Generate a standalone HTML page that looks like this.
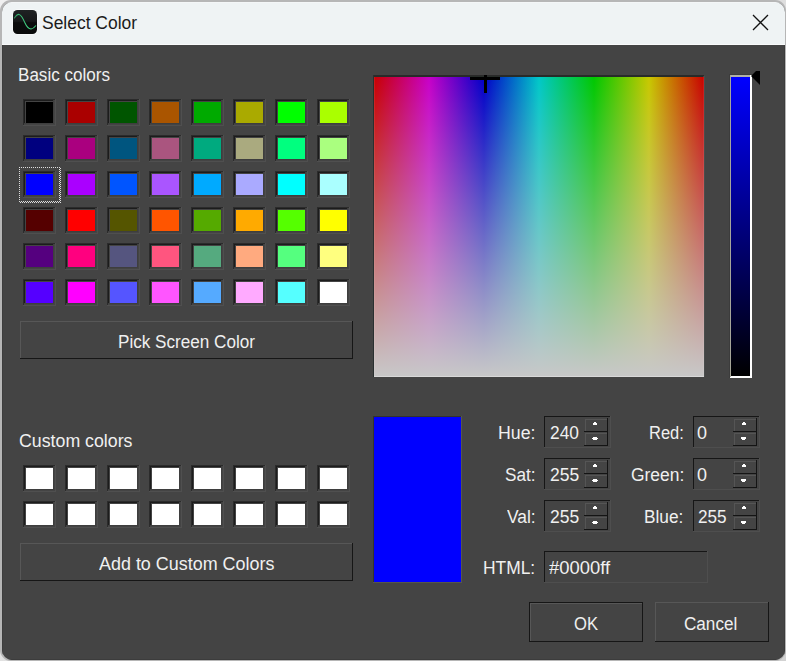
<!DOCTYPE html>
<html><head><meta charset="utf-8"><style>
html,body{margin:0;padding:0;width:786px;height:661px;overflow:hidden;background:linear-gradient(135deg,#f0f0f0,#e0e0e0 50%,#d2d2d2);position:relative}
div,svg{position:absolute}
.t{font-family:"Liberation Sans",sans-serif;font-size:18px;line-height:20px;white-space:pre;transform-origin:0 0}
</style></head><body>
<div style="left:0px;top:0px;width:786px;height:661px;background:#b6b6b6;border-radius:11px"></div><div style="left:2px;top:2px;width:783px;height:658px;border-radius:10px;overflow:hidden;background:#444444"><div style="left:0px;top:0px;width:783px;height:43px;background:#eff3f4"></div><div style="left:0px;top:0px;width:783px;height:1px;background:#f4f6f7"></div><div style="left:0px;top:42px;width:783px;height:1px;background:#fafbfb"></div><div style="left:0px;top:43px;width:1px;height:615px;background:#3d3d3d"></div><div style="left:782px;top:43px;width:1px;height:615px;background:#3c3c3c"></div><div style="left:0px;top:657px;width:783px;height:1px;background:#3c3c3c"></div></div><div style="left:23px;top:99px;width:32px;height:1px;background:#2b2b2b"></div><div style="left:23px;top:99px;width:1px;height:26px;background:#2b2b2b"></div><div style="left:24px;top:100px;width:30px;height:1px;background:#1c1c1c"></div><div style="left:24px;top:100px;width:1px;height:24px;background:#1c1c1c"></div><div style="left:23px;top:125px;width:33px;height:1px;background:#4f4f4f"></div><div style="left:55px;top:99px;width:1px;height:27px;background:#4f4f4f"></div><div style="left:24px;top:123px;width:30px;height:1px;background:#3e3e3e"></div><div style="left:53px;top:100px;width:1px;height:24px;background:#3e3e3e"></div><div style="left:26px;top:102px;width:27px;height:21px;background:rgb(0, 0, 0)"></div><div style="left:23px;top:135px;width:32px;height:1px;background:#2b2b2b"></div><div style="left:23px;top:135px;width:1px;height:26px;background:#2b2b2b"></div><div style="left:24px;top:136px;width:30px;height:1px;background:#1c1c1c"></div><div style="left:24px;top:136px;width:1px;height:24px;background:#1c1c1c"></div><div style="left:23px;top:161px;width:33px;height:1px;background:#4f4f4f"></div><div style="left:55px;top:135px;width:1px;height:27px;background:#4f4f4f"></div><div style="left:24px;top:159px;width:30px;height:1px;background:#3e3e3e"></div><div style="left:53px;top:136px;width:1px;height:24px;background:#3e3e3e"></div><div style="left:26px;top:138px;width:27px;height:21px;background:rgb(0, 0, 127)"></div><div style="left:23px;top:171px;width:32px;height:1px;background:#2b2b2b"></div><div style="left:23px;top:171px;width:1px;height:26px;background:#2b2b2b"></div><div style="left:24px;top:172px;width:30px;height:1px;background:#1c1c1c"></div><div style="left:24px;top:172px;width:1px;height:24px;background:#1c1c1c"></div><div style="left:23px;top:197px;width:33px;height:1px;background:#4f4f4f"></div><div style="left:55px;top:171px;width:1px;height:27px;background:#4f4f4f"></div><div style="left:24px;top:195px;width:30px;height:1px;background:#3e3e3e"></div><div style="left:53px;top:172px;width:1px;height:24px;background:#3e3e3e"></div><div style="left:26px;top:174px;width:27px;height:21px;background:rgb(0, 0, 255)"></div><div style="left:23px;top:207px;width:32px;height:1px;background:#2b2b2b"></div><div style="left:23px;top:207px;width:1px;height:26px;background:#2b2b2b"></div><div style="left:24px;top:208px;width:30px;height:1px;background:#1c1c1c"></div><div style="left:24px;top:208px;width:1px;height:24px;background:#1c1c1c"></div><div style="left:23px;top:233px;width:33px;height:1px;background:#4f4f4f"></div><div style="left:55px;top:207px;width:1px;height:27px;background:#4f4f4f"></div><div style="left:24px;top:231px;width:30px;height:1px;background:#3e3e3e"></div><div style="left:53px;top:208px;width:1px;height:24px;background:#3e3e3e"></div><div style="left:26px;top:210px;width:27px;height:21px;background:rgb(85, 0, 0)"></div><div style="left:23px;top:243px;width:32px;height:1px;background:#2b2b2b"></div><div style="left:23px;top:243px;width:1px;height:26px;background:#2b2b2b"></div><div style="left:24px;top:244px;width:30px;height:1px;background:#1c1c1c"></div><div style="left:24px;top:244px;width:1px;height:24px;background:#1c1c1c"></div><div style="left:23px;top:269px;width:33px;height:1px;background:#4f4f4f"></div><div style="left:55px;top:243px;width:1px;height:27px;background:#4f4f4f"></div><div style="left:24px;top:267px;width:30px;height:1px;background:#3e3e3e"></div><div style="left:53px;top:244px;width:1px;height:24px;background:#3e3e3e"></div><div style="left:26px;top:246px;width:27px;height:21px;background:rgb(85, 0, 127)"></div><div style="left:23px;top:279px;width:32px;height:1px;background:#2b2b2b"></div><div style="left:23px;top:279px;width:1px;height:26px;background:#2b2b2b"></div><div style="left:24px;top:280px;width:30px;height:1px;background:#1c1c1c"></div><div style="left:24px;top:280px;width:1px;height:24px;background:#1c1c1c"></div><div style="left:23px;top:305px;width:33px;height:1px;background:#4f4f4f"></div><div style="left:55px;top:279px;width:1px;height:27px;background:#4f4f4f"></div><div style="left:24px;top:303px;width:30px;height:1px;background:#3e3e3e"></div><div style="left:53px;top:280px;width:1px;height:24px;background:#3e3e3e"></div><div style="left:26px;top:282px;width:27px;height:21px;background:rgb(85, 0, 255)"></div><div style="left:65px;top:99px;width:32px;height:1px;background:#2b2b2b"></div><div style="left:65px;top:99px;width:1px;height:26px;background:#2b2b2b"></div><div style="left:66px;top:100px;width:30px;height:1px;background:#1c1c1c"></div><div style="left:66px;top:100px;width:1px;height:24px;background:#1c1c1c"></div><div style="left:65px;top:125px;width:33px;height:1px;background:#4f4f4f"></div><div style="left:97px;top:99px;width:1px;height:27px;background:#4f4f4f"></div><div style="left:66px;top:123px;width:30px;height:1px;background:#3e3e3e"></div><div style="left:95px;top:100px;width:1px;height:24px;background:#3e3e3e"></div><div style="left:68px;top:102px;width:27px;height:21px;background:rgb(170, 0, 0)"></div><div style="left:65px;top:135px;width:32px;height:1px;background:#2b2b2b"></div><div style="left:65px;top:135px;width:1px;height:26px;background:#2b2b2b"></div><div style="left:66px;top:136px;width:30px;height:1px;background:#1c1c1c"></div><div style="left:66px;top:136px;width:1px;height:24px;background:#1c1c1c"></div><div style="left:65px;top:161px;width:33px;height:1px;background:#4f4f4f"></div><div style="left:97px;top:135px;width:1px;height:27px;background:#4f4f4f"></div><div style="left:66px;top:159px;width:30px;height:1px;background:#3e3e3e"></div><div style="left:95px;top:136px;width:1px;height:24px;background:#3e3e3e"></div><div style="left:68px;top:138px;width:27px;height:21px;background:rgb(170, 0, 127)"></div><div style="left:65px;top:171px;width:32px;height:1px;background:#2b2b2b"></div><div style="left:65px;top:171px;width:1px;height:26px;background:#2b2b2b"></div><div style="left:66px;top:172px;width:30px;height:1px;background:#1c1c1c"></div><div style="left:66px;top:172px;width:1px;height:24px;background:#1c1c1c"></div><div style="left:65px;top:197px;width:33px;height:1px;background:#4f4f4f"></div><div style="left:97px;top:171px;width:1px;height:27px;background:#4f4f4f"></div><div style="left:66px;top:195px;width:30px;height:1px;background:#3e3e3e"></div><div style="left:95px;top:172px;width:1px;height:24px;background:#3e3e3e"></div><div style="left:68px;top:174px;width:27px;height:21px;background:rgb(170, 0, 255)"></div><div style="left:65px;top:207px;width:32px;height:1px;background:#2b2b2b"></div><div style="left:65px;top:207px;width:1px;height:26px;background:#2b2b2b"></div><div style="left:66px;top:208px;width:30px;height:1px;background:#1c1c1c"></div><div style="left:66px;top:208px;width:1px;height:24px;background:#1c1c1c"></div><div style="left:65px;top:233px;width:33px;height:1px;background:#4f4f4f"></div><div style="left:97px;top:207px;width:1px;height:27px;background:#4f4f4f"></div><div style="left:66px;top:231px;width:30px;height:1px;background:#3e3e3e"></div><div style="left:95px;top:208px;width:1px;height:24px;background:#3e3e3e"></div><div style="left:68px;top:210px;width:27px;height:21px;background:rgb(255, 0, 0)"></div><div style="left:65px;top:243px;width:32px;height:1px;background:#2b2b2b"></div><div style="left:65px;top:243px;width:1px;height:26px;background:#2b2b2b"></div><div style="left:66px;top:244px;width:30px;height:1px;background:#1c1c1c"></div><div style="left:66px;top:244px;width:1px;height:24px;background:#1c1c1c"></div><div style="left:65px;top:269px;width:33px;height:1px;background:#4f4f4f"></div><div style="left:97px;top:243px;width:1px;height:27px;background:#4f4f4f"></div><div style="left:66px;top:267px;width:30px;height:1px;background:#3e3e3e"></div><div style="left:95px;top:244px;width:1px;height:24px;background:#3e3e3e"></div><div style="left:68px;top:246px;width:27px;height:21px;background:rgb(255, 0, 127)"></div><div style="left:65px;top:279px;width:32px;height:1px;background:#2b2b2b"></div><div style="left:65px;top:279px;width:1px;height:26px;background:#2b2b2b"></div><div style="left:66px;top:280px;width:30px;height:1px;background:#1c1c1c"></div><div style="left:66px;top:280px;width:1px;height:24px;background:#1c1c1c"></div><div style="left:65px;top:305px;width:33px;height:1px;background:#4f4f4f"></div><div style="left:97px;top:279px;width:1px;height:27px;background:#4f4f4f"></div><div style="left:66px;top:303px;width:30px;height:1px;background:#3e3e3e"></div><div style="left:95px;top:280px;width:1px;height:24px;background:#3e3e3e"></div><div style="left:68px;top:282px;width:27px;height:21px;background:rgb(255, 0, 255)"></div><div style="left:107px;top:99px;width:32px;height:1px;background:#2b2b2b"></div><div style="left:107px;top:99px;width:1px;height:26px;background:#2b2b2b"></div><div style="left:108px;top:100px;width:30px;height:1px;background:#1c1c1c"></div><div style="left:108px;top:100px;width:1px;height:24px;background:#1c1c1c"></div><div style="left:107px;top:125px;width:33px;height:1px;background:#4f4f4f"></div><div style="left:139px;top:99px;width:1px;height:27px;background:#4f4f4f"></div><div style="left:108px;top:123px;width:30px;height:1px;background:#3e3e3e"></div><div style="left:137px;top:100px;width:1px;height:24px;background:#3e3e3e"></div><div style="left:110px;top:102px;width:27px;height:21px;background:rgb(0, 85, 0)"></div><div style="left:107px;top:135px;width:32px;height:1px;background:#2b2b2b"></div><div style="left:107px;top:135px;width:1px;height:26px;background:#2b2b2b"></div><div style="left:108px;top:136px;width:30px;height:1px;background:#1c1c1c"></div><div style="left:108px;top:136px;width:1px;height:24px;background:#1c1c1c"></div><div style="left:107px;top:161px;width:33px;height:1px;background:#4f4f4f"></div><div style="left:139px;top:135px;width:1px;height:27px;background:#4f4f4f"></div><div style="left:108px;top:159px;width:30px;height:1px;background:#3e3e3e"></div><div style="left:137px;top:136px;width:1px;height:24px;background:#3e3e3e"></div><div style="left:110px;top:138px;width:27px;height:21px;background:rgb(0, 85, 127)"></div><div style="left:107px;top:171px;width:32px;height:1px;background:#2b2b2b"></div><div style="left:107px;top:171px;width:1px;height:26px;background:#2b2b2b"></div><div style="left:108px;top:172px;width:30px;height:1px;background:#1c1c1c"></div><div style="left:108px;top:172px;width:1px;height:24px;background:#1c1c1c"></div><div style="left:107px;top:197px;width:33px;height:1px;background:#4f4f4f"></div><div style="left:139px;top:171px;width:1px;height:27px;background:#4f4f4f"></div><div style="left:108px;top:195px;width:30px;height:1px;background:#3e3e3e"></div><div style="left:137px;top:172px;width:1px;height:24px;background:#3e3e3e"></div><div style="left:110px;top:174px;width:27px;height:21px;background:rgb(0, 85, 255)"></div><div style="left:107px;top:207px;width:32px;height:1px;background:#2b2b2b"></div><div style="left:107px;top:207px;width:1px;height:26px;background:#2b2b2b"></div><div style="left:108px;top:208px;width:30px;height:1px;background:#1c1c1c"></div><div style="left:108px;top:208px;width:1px;height:24px;background:#1c1c1c"></div><div style="left:107px;top:233px;width:33px;height:1px;background:#4f4f4f"></div><div style="left:139px;top:207px;width:1px;height:27px;background:#4f4f4f"></div><div style="left:108px;top:231px;width:30px;height:1px;background:#3e3e3e"></div><div style="left:137px;top:208px;width:1px;height:24px;background:#3e3e3e"></div><div style="left:110px;top:210px;width:27px;height:21px;background:rgb(85, 85, 0)"></div><div style="left:107px;top:243px;width:32px;height:1px;background:#2b2b2b"></div><div style="left:107px;top:243px;width:1px;height:26px;background:#2b2b2b"></div><div style="left:108px;top:244px;width:30px;height:1px;background:#1c1c1c"></div><div style="left:108px;top:244px;width:1px;height:24px;background:#1c1c1c"></div><div style="left:107px;top:269px;width:33px;height:1px;background:#4f4f4f"></div><div style="left:139px;top:243px;width:1px;height:27px;background:#4f4f4f"></div><div style="left:108px;top:267px;width:30px;height:1px;background:#3e3e3e"></div><div style="left:137px;top:244px;width:1px;height:24px;background:#3e3e3e"></div><div style="left:110px;top:246px;width:27px;height:21px;background:rgb(85, 85, 127)"></div><div style="left:107px;top:279px;width:32px;height:1px;background:#2b2b2b"></div><div style="left:107px;top:279px;width:1px;height:26px;background:#2b2b2b"></div><div style="left:108px;top:280px;width:30px;height:1px;background:#1c1c1c"></div><div style="left:108px;top:280px;width:1px;height:24px;background:#1c1c1c"></div><div style="left:107px;top:305px;width:33px;height:1px;background:#4f4f4f"></div><div style="left:139px;top:279px;width:1px;height:27px;background:#4f4f4f"></div><div style="left:108px;top:303px;width:30px;height:1px;background:#3e3e3e"></div><div style="left:137px;top:280px;width:1px;height:24px;background:#3e3e3e"></div><div style="left:110px;top:282px;width:27px;height:21px;background:rgb(85, 85, 255)"></div><div style="left:149px;top:99px;width:32px;height:1px;background:#2b2b2b"></div><div style="left:149px;top:99px;width:1px;height:26px;background:#2b2b2b"></div><div style="left:150px;top:100px;width:30px;height:1px;background:#1c1c1c"></div><div style="left:150px;top:100px;width:1px;height:24px;background:#1c1c1c"></div><div style="left:149px;top:125px;width:33px;height:1px;background:#4f4f4f"></div><div style="left:181px;top:99px;width:1px;height:27px;background:#4f4f4f"></div><div style="left:150px;top:123px;width:30px;height:1px;background:#3e3e3e"></div><div style="left:179px;top:100px;width:1px;height:24px;background:#3e3e3e"></div><div style="left:152px;top:102px;width:27px;height:21px;background:rgb(170, 85, 0)"></div><div style="left:149px;top:135px;width:32px;height:1px;background:#2b2b2b"></div><div style="left:149px;top:135px;width:1px;height:26px;background:#2b2b2b"></div><div style="left:150px;top:136px;width:30px;height:1px;background:#1c1c1c"></div><div style="left:150px;top:136px;width:1px;height:24px;background:#1c1c1c"></div><div style="left:149px;top:161px;width:33px;height:1px;background:#4f4f4f"></div><div style="left:181px;top:135px;width:1px;height:27px;background:#4f4f4f"></div><div style="left:150px;top:159px;width:30px;height:1px;background:#3e3e3e"></div><div style="left:179px;top:136px;width:1px;height:24px;background:#3e3e3e"></div><div style="left:152px;top:138px;width:27px;height:21px;background:rgb(170, 85, 127)"></div><div style="left:149px;top:171px;width:32px;height:1px;background:#2b2b2b"></div><div style="left:149px;top:171px;width:1px;height:26px;background:#2b2b2b"></div><div style="left:150px;top:172px;width:30px;height:1px;background:#1c1c1c"></div><div style="left:150px;top:172px;width:1px;height:24px;background:#1c1c1c"></div><div style="left:149px;top:197px;width:33px;height:1px;background:#4f4f4f"></div><div style="left:181px;top:171px;width:1px;height:27px;background:#4f4f4f"></div><div style="left:150px;top:195px;width:30px;height:1px;background:#3e3e3e"></div><div style="left:179px;top:172px;width:1px;height:24px;background:#3e3e3e"></div><div style="left:152px;top:174px;width:27px;height:21px;background:rgb(170, 85, 255)"></div><div style="left:149px;top:207px;width:32px;height:1px;background:#2b2b2b"></div><div style="left:149px;top:207px;width:1px;height:26px;background:#2b2b2b"></div><div style="left:150px;top:208px;width:30px;height:1px;background:#1c1c1c"></div><div style="left:150px;top:208px;width:1px;height:24px;background:#1c1c1c"></div><div style="left:149px;top:233px;width:33px;height:1px;background:#4f4f4f"></div><div style="left:181px;top:207px;width:1px;height:27px;background:#4f4f4f"></div><div style="left:150px;top:231px;width:30px;height:1px;background:#3e3e3e"></div><div style="left:179px;top:208px;width:1px;height:24px;background:#3e3e3e"></div><div style="left:152px;top:210px;width:27px;height:21px;background:rgb(255, 85, 0)"></div><div style="left:149px;top:243px;width:32px;height:1px;background:#2b2b2b"></div><div style="left:149px;top:243px;width:1px;height:26px;background:#2b2b2b"></div><div style="left:150px;top:244px;width:30px;height:1px;background:#1c1c1c"></div><div style="left:150px;top:244px;width:1px;height:24px;background:#1c1c1c"></div><div style="left:149px;top:269px;width:33px;height:1px;background:#4f4f4f"></div><div style="left:181px;top:243px;width:1px;height:27px;background:#4f4f4f"></div><div style="left:150px;top:267px;width:30px;height:1px;background:#3e3e3e"></div><div style="left:179px;top:244px;width:1px;height:24px;background:#3e3e3e"></div><div style="left:152px;top:246px;width:27px;height:21px;background:rgb(255, 85, 127)"></div><div style="left:149px;top:279px;width:32px;height:1px;background:#2b2b2b"></div><div style="left:149px;top:279px;width:1px;height:26px;background:#2b2b2b"></div><div style="left:150px;top:280px;width:30px;height:1px;background:#1c1c1c"></div><div style="left:150px;top:280px;width:1px;height:24px;background:#1c1c1c"></div><div style="left:149px;top:305px;width:33px;height:1px;background:#4f4f4f"></div><div style="left:181px;top:279px;width:1px;height:27px;background:#4f4f4f"></div><div style="left:150px;top:303px;width:30px;height:1px;background:#3e3e3e"></div><div style="left:179px;top:280px;width:1px;height:24px;background:#3e3e3e"></div><div style="left:152px;top:282px;width:27px;height:21px;background:rgb(255, 85, 255)"></div><div style="left:191px;top:99px;width:32px;height:1px;background:#2b2b2b"></div><div style="left:191px;top:99px;width:1px;height:26px;background:#2b2b2b"></div><div style="left:192px;top:100px;width:30px;height:1px;background:#1c1c1c"></div><div style="left:192px;top:100px;width:1px;height:24px;background:#1c1c1c"></div><div style="left:191px;top:125px;width:33px;height:1px;background:#4f4f4f"></div><div style="left:223px;top:99px;width:1px;height:27px;background:#4f4f4f"></div><div style="left:192px;top:123px;width:30px;height:1px;background:#3e3e3e"></div><div style="left:221px;top:100px;width:1px;height:24px;background:#3e3e3e"></div><div style="left:194px;top:102px;width:27px;height:21px;background:rgb(0, 170, 0)"></div><div style="left:191px;top:135px;width:32px;height:1px;background:#2b2b2b"></div><div style="left:191px;top:135px;width:1px;height:26px;background:#2b2b2b"></div><div style="left:192px;top:136px;width:30px;height:1px;background:#1c1c1c"></div><div style="left:192px;top:136px;width:1px;height:24px;background:#1c1c1c"></div><div style="left:191px;top:161px;width:33px;height:1px;background:#4f4f4f"></div><div style="left:223px;top:135px;width:1px;height:27px;background:#4f4f4f"></div><div style="left:192px;top:159px;width:30px;height:1px;background:#3e3e3e"></div><div style="left:221px;top:136px;width:1px;height:24px;background:#3e3e3e"></div><div style="left:194px;top:138px;width:27px;height:21px;background:rgb(0, 170, 127)"></div><div style="left:191px;top:171px;width:32px;height:1px;background:#2b2b2b"></div><div style="left:191px;top:171px;width:1px;height:26px;background:#2b2b2b"></div><div style="left:192px;top:172px;width:30px;height:1px;background:#1c1c1c"></div><div style="left:192px;top:172px;width:1px;height:24px;background:#1c1c1c"></div><div style="left:191px;top:197px;width:33px;height:1px;background:#4f4f4f"></div><div style="left:223px;top:171px;width:1px;height:27px;background:#4f4f4f"></div><div style="left:192px;top:195px;width:30px;height:1px;background:#3e3e3e"></div><div style="left:221px;top:172px;width:1px;height:24px;background:#3e3e3e"></div><div style="left:194px;top:174px;width:27px;height:21px;background:rgb(0, 170, 255)"></div><div style="left:191px;top:207px;width:32px;height:1px;background:#2b2b2b"></div><div style="left:191px;top:207px;width:1px;height:26px;background:#2b2b2b"></div><div style="left:192px;top:208px;width:30px;height:1px;background:#1c1c1c"></div><div style="left:192px;top:208px;width:1px;height:24px;background:#1c1c1c"></div><div style="left:191px;top:233px;width:33px;height:1px;background:#4f4f4f"></div><div style="left:223px;top:207px;width:1px;height:27px;background:#4f4f4f"></div><div style="left:192px;top:231px;width:30px;height:1px;background:#3e3e3e"></div><div style="left:221px;top:208px;width:1px;height:24px;background:#3e3e3e"></div><div style="left:194px;top:210px;width:27px;height:21px;background:rgb(85, 170, 0)"></div><div style="left:191px;top:243px;width:32px;height:1px;background:#2b2b2b"></div><div style="left:191px;top:243px;width:1px;height:26px;background:#2b2b2b"></div><div style="left:192px;top:244px;width:30px;height:1px;background:#1c1c1c"></div><div style="left:192px;top:244px;width:1px;height:24px;background:#1c1c1c"></div><div style="left:191px;top:269px;width:33px;height:1px;background:#4f4f4f"></div><div style="left:223px;top:243px;width:1px;height:27px;background:#4f4f4f"></div><div style="left:192px;top:267px;width:30px;height:1px;background:#3e3e3e"></div><div style="left:221px;top:244px;width:1px;height:24px;background:#3e3e3e"></div><div style="left:194px;top:246px;width:27px;height:21px;background:rgb(85, 170, 127)"></div><div style="left:191px;top:279px;width:32px;height:1px;background:#2b2b2b"></div><div style="left:191px;top:279px;width:1px;height:26px;background:#2b2b2b"></div><div style="left:192px;top:280px;width:30px;height:1px;background:#1c1c1c"></div><div style="left:192px;top:280px;width:1px;height:24px;background:#1c1c1c"></div><div style="left:191px;top:305px;width:33px;height:1px;background:#4f4f4f"></div><div style="left:223px;top:279px;width:1px;height:27px;background:#4f4f4f"></div><div style="left:192px;top:303px;width:30px;height:1px;background:#3e3e3e"></div><div style="left:221px;top:280px;width:1px;height:24px;background:#3e3e3e"></div><div style="left:194px;top:282px;width:27px;height:21px;background:rgb(85, 170, 255)"></div><div style="left:233px;top:99px;width:32px;height:1px;background:#2b2b2b"></div><div style="left:233px;top:99px;width:1px;height:26px;background:#2b2b2b"></div><div style="left:234px;top:100px;width:30px;height:1px;background:#1c1c1c"></div><div style="left:234px;top:100px;width:1px;height:24px;background:#1c1c1c"></div><div style="left:233px;top:125px;width:33px;height:1px;background:#4f4f4f"></div><div style="left:265px;top:99px;width:1px;height:27px;background:#4f4f4f"></div><div style="left:234px;top:123px;width:30px;height:1px;background:#3e3e3e"></div><div style="left:263px;top:100px;width:1px;height:24px;background:#3e3e3e"></div><div style="left:236px;top:102px;width:27px;height:21px;background:rgb(170, 170, 0)"></div><div style="left:233px;top:135px;width:32px;height:1px;background:#2b2b2b"></div><div style="left:233px;top:135px;width:1px;height:26px;background:#2b2b2b"></div><div style="left:234px;top:136px;width:30px;height:1px;background:#1c1c1c"></div><div style="left:234px;top:136px;width:1px;height:24px;background:#1c1c1c"></div><div style="left:233px;top:161px;width:33px;height:1px;background:#4f4f4f"></div><div style="left:265px;top:135px;width:1px;height:27px;background:#4f4f4f"></div><div style="left:234px;top:159px;width:30px;height:1px;background:#3e3e3e"></div><div style="left:263px;top:136px;width:1px;height:24px;background:#3e3e3e"></div><div style="left:236px;top:138px;width:27px;height:21px;background:rgb(170, 170, 127)"></div><div style="left:233px;top:171px;width:32px;height:1px;background:#2b2b2b"></div><div style="left:233px;top:171px;width:1px;height:26px;background:#2b2b2b"></div><div style="left:234px;top:172px;width:30px;height:1px;background:#1c1c1c"></div><div style="left:234px;top:172px;width:1px;height:24px;background:#1c1c1c"></div><div style="left:233px;top:197px;width:33px;height:1px;background:#4f4f4f"></div><div style="left:265px;top:171px;width:1px;height:27px;background:#4f4f4f"></div><div style="left:234px;top:195px;width:30px;height:1px;background:#3e3e3e"></div><div style="left:263px;top:172px;width:1px;height:24px;background:#3e3e3e"></div><div style="left:236px;top:174px;width:27px;height:21px;background:rgb(170, 170, 255)"></div><div style="left:233px;top:207px;width:32px;height:1px;background:#2b2b2b"></div><div style="left:233px;top:207px;width:1px;height:26px;background:#2b2b2b"></div><div style="left:234px;top:208px;width:30px;height:1px;background:#1c1c1c"></div><div style="left:234px;top:208px;width:1px;height:24px;background:#1c1c1c"></div><div style="left:233px;top:233px;width:33px;height:1px;background:#4f4f4f"></div><div style="left:265px;top:207px;width:1px;height:27px;background:#4f4f4f"></div><div style="left:234px;top:231px;width:30px;height:1px;background:#3e3e3e"></div><div style="left:263px;top:208px;width:1px;height:24px;background:#3e3e3e"></div><div style="left:236px;top:210px;width:27px;height:21px;background:rgb(255, 170, 0)"></div><div style="left:233px;top:243px;width:32px;height:1px;background:#2b2b2b"></div><div style="left:233px;top:243px;width:1px;height:26px;background:#2b2b2b"></div><div style="left:234px;top:244px;width:30px;height:1px;background:#1c1c1c"></div><div style="left:234px;top:244px;width:1px;height:24px;background:#1c1c1c"></div><div style="left:233px;top:269px;width:33px;height:1px;background:#4f4f4f"></div><div style="left:265px;top:243px;width:1px;height:27px;background:#4f4f4f"></div><div style="left:234px;top:267px;width:30px;height:1px;background:#3e3e3e"></div><div style="left:263px;top:244px;width:1px;height:24px;background:#3e3e3e"></div><div style="left:236px;top:246px;width:27px;height:21px;background:rgb(255, 170, 127)"></div><div style="left:233px;top:279px;width:32px;height:1px;background:#2b2b2b"></div><div style="left:233px;top:279px;width:1px;height:26px;background:#2b2b2b"></div><div style="left:234px;top:280px;width:30px;height:1px;background:#1c1c1c"></div><div style="left:234px;top:280px;width:1px;height:24px;background:#1c1c1c"></div><div style="left:233px;top:305px;width:33px;height:1px;background:#4f4f4f"></div><div style="left:265px;top:279px;width:1px;height:27px;background:#4f4f4f"></div><div style="left:234px;top:303px;width:30px;height:1px;background:#3e3e3e"></div><div style="left:263px;top:280px;width:1px;height:24px;background:#3e3e3e"></div><div style="left:236px;top:282px;width:27px;height:21px;background:rgb(255, 170, 255)"></div><div style="left:275px;top:99px;width:32px;height:1px;background:#2b2b2b"></div><div style="left:275px;top:99px;width:1px;height:26px;background:#2b2b2b"></div><div style="left:276px;top:100px;width:30px;height:1px;background:#1c1c1c"></div><div style="left:276px;top:100px;width:1px;height:24px;background:#1c1c1c"></div><div style="left:275px;top:125px;width:33px;height:1px;background:#4f4f4f"></div><div style="left:307px;top:99px;width:1px;height:27px;background:#4f4f4f"></div><div style="left:276px;top:123px;width:30px;height:1px;background:#3e3e3e"></div><div style="left:305px;top:100px;width:1px;height:24px;background:#3e3e3e"></div><div style="left:278px;top:102px;width:27px;height:21px;background:rgb(0, 255, 0)"></div><div style="left:275px;top:135px;width:32px;height:1px;background:#2b2b2b"></div><div style="left:275px;top:135px;width:1px;height:26px;background:#2b2b2b"></div><div style="left:276px;top:136px;width:30px;height:1px;background:#1c1c1c"></div><div style="left:276px;top:136px;width:1px;height:24px;background:#1c1c1c"></div><div style="left:275px;top:161px;width:33px;height:1px;background:#4f4f4f"></div><div style="left:307px;top:135px;width:1px;height:27px;background:#4f4f4f"></div><div style="left:276px;top:159px;width:30px;height:1px;background:#3e3e3e"></div><div style="left:305px;top:136px;width:1px;height:24px;background:#3e3e3e"></div><div style="left:278px;top:138px;width:27px;height:21px;background:rgb(0, 255, 127)"></div><div style="left:275px;top:171px;width:32px;height:1px;background:#2b2b2b"></div><div style="left:275px;top:171px;width:1px;height:26px;background:#2b2b2b"></div><div style="left:276px;top:172px;width:30px;height:1px;background:#1c1c1c"></div><div style="left:276px;top:172px;width:1px;height:24px;background:#1c1c1c"></div><div style="left:275px;top:197px;width:33px;height:1px;background:#4f4f4f"></div><div style="left:307px;top:171px;width:1px;height:27px;background:#4f4f4f"></div><div style="left:276px;top:195px;width:30px;height:1px;background:#3e3e3e"></div><div style="left:305px;top:172px;width:1px;height:24px;background:#3e3e3e"></div><div style="left:278px;top:174px;width:27px;height:21px;background:rgb(0, 255, 255)"></div><div style="left:275px;top:207px;width:32px;height:1px;background:#2b2b2b"></div><div style="left:275px;top:207px;width:1px;height:26px;background:#2b2b2b"></div><div style="left:276px;top:208px;width:30px;height:1px;background:#1c1c1c"></div><div style="left:276px;top:208px;width:1px;height:24px;background:#1c1c1c"></div><div style="left:275px;top:233px;width:33px;height:1px;background:#4f4f4f"></div><div style="left:307px;top:207px;width:1px;height:27px;background:#4f4f4f"></div><div style="left:276px;top:231px;width:30px;height:1px;background:#3e3e3e"></div><div style="left:305px;top:208px;width:1px;height:24px;background:#3e3e3e"></div><div style="left:278px;top:210px;width:27px;height:21px;background:rgb(85, 255, 0)"></div><div style="left:275px;top:243px;width:32px;height:1px;background:#2b2b2b"></div><div style="left:275px;top:243px;width:1px;height:26px;background:#2b2b2b"></div><div style="left:276px;top:244px;width:30px;height:1px;background:#1c1c1c"></div><div style="left:276px;top:244px;width:1px;height:24px;background:#1c1c1c"></div><div style="left:275px;top:269px;width:33px;height:1px;background:#4f4f4f"></div><div style="left:307px;top:243px;width:1px;height:27px;background:#4f4f4f"></div><div style="left:276px;top:267px;width:30px;height:1px;background:#3e3e3e"></div><div style="left:305px;top:244px;width:1px;height:24px;background:#3e3e3e"></div><div style="left:278px;top:246px;width:27px;height:21px;background:rgb(85, 255, 127)"></div><div style="left:275px;top:279px;width:32px;height:1px;background:#2b2b2b"></div><div style="left:275px;top:279px;width:1px;height:26px;background:#2b2b2b"></div><div style="left:276px;top:280px;width:30px;height:1px;background:#1c1c1c"></div><div style="left:276px;top:280px;width:1px;height:24px;background:#1c1c1c"></div><div style="left:275px;top:305px;width:33px;height:1px;background:#4f4f4f"></div><div style="left:307px;top:279px;width:1px;height:27px;background:#4f4f4f"></div><div style="left:276px;top:303px;width:30px;height:1px;background:#3e3e3e"></div><div style="left:305px;top:280px;width:1px;height:24px;background:#3e3e3e"></div><div style="left:278px;top:282px;width:27px;height:21px;background:rgb(85, 255, 255)"></div><div style="left:317px;top:99px;width:32px;height:1px;background:#2b2b2b"></div><div style="left:317px;top:99px;width:1px;height:26px;background:#2b2b2b"></div><div style="left:318px;top:100px;width:30px;height:1px;background:#1c1c1c"></div><div style="left:318px;top:100px;width:1px;height:24px;background:#1c1c1c"></div><div style="left:317px;top:125px;width:33px;height:1px;background:#4f4f4f"></div><div style="left:349px;top:99px;width:1px;height:27px;background:#4f4f4f"></div><div style="left:318px;top:123px;width:30px;height:1px;background:#3e3e3e"></div><div style="left:347px;top:100px;width:1px;height:24px;background:#3e3e3e"></div><div style="left:320px;top:102px;width:27px;height:21px;background:rgb(170, 255, 0)"></div><div style="left:317px;top:135px;width:32px;height:1px;background:#2b2b2b"></div><div style="left:317px;top:135px;width:1px;height:26px;background:#2b2b2b"></div><div style="left:318px;top:136px;width:30px;height:1px;background:#1c1c1c"></div><div style="left:318px;top:136px;width:1px;height:24px;background:#1c1c1c"></div><div style="left:317px;top:161px;width:33px;height:1px;background:#4f4f4f"></div><div style="left:349px;top:135px;width:1px;height:27px;background:#4f4f4f"></div><div style="left:318px;top:159px;width:30px;height:1px;background:#3e3e3e"></div><div style="left:347px;top:136px;width:1px;height:24px;background:#3e3e3e"></div><div style="left:320px;top:138px;width:27px;height:21px;background:rgb(170, 255, 127)"></div><div style="left:317px;top:171px;width:32px;height:1px;background:#2b2b2b"></div><div style="left:317px;top:171px;width:1px;height:26px;background:#2b2b2b"></div><div style="left:318px;top:172px;width:30px;height:1px;background:#1c1c1c"></div><div style="left:318px;top:172px;width:1px;height:24px;background:#1c1c1c"></div><div style="left:317px;top:197px;width:33px;height:1px;background:#4f4f4f"></div><div style="left:349px;top:171px;width:1px;height:27px;background:#4f4f4f"></div><div style="left:318px;top:195px;width:30px;height:1px;background:#3e3e3e"></div><div style="left:347px;top:172px;width:1px;height:24px;background:#3e3e3e"></div><div style="left:320px;top:174px;width:27px;height:21px;background:rgb(170, 255, 255)"></div><div style="left:317px;top:207px;width:32px;height:1px;background:#2b2b2b"></div><div style="left:317px;top:207px;width:1px;height:26px;background:#2b2b2b"></div><div style="left:318px;top:208px;width:30px;height:1px;background:#1c1c1c"></div><div style="left:318px;top:208px;width:1px;height:24px;background:#1c1c1c"></div><div style="left:317px;top:233px;width:33px;height:1px;background:#4f4f4f"></div><div style="left:349px;top:207px;width:1px;height:27px;background:#4f4f4f"></div><div style="left:318px;top:231px;width:30px;height:1px;background:#3e3e3e"></div><div style="left:347px;top:208px;width:1px;height:24px;background:#3e3e3e"></div><div style="left:320px;top:210px;width:27px;height:21px;background:rgb(255, 255, 0)"></div><div style="left:317px;top:243px;width:32px;height:1px;background:#2b2b2b"></div><div style="left:317px;top:243px;width:1px;height:26px;background:#2b2b2b"></div><div style="left:318px;top:244px;width:30px;height:1px;background:#1c1c1c"></div><div style="left:318px;top:244px;width:1px;height:24px;background:#1c1c1c"></div><div style="left:317px;top:269px;width:33px;height:1px;background:#4f4f4f"></div><div style="left:349px;top:243px;width:1px;height:27px;background:#4f4f4f"></div><div style="left:318px;top:267px;width:30px;height:1px;background:#3e3e3e"></div><div style="left:347px;top:244px;width:1px;height:24px;background:#3e3e3e"></div><div style="left:320px;top:246px;width:27px;height:21px;background:rgb(255, 255, 127)"></div><div style="left:317px;top:279px;width:32px;height:1px;background:#2b2b2b"></div><div style="left:317px;top:279px;width:1px;height:26px;background:#2b2b2b"></div><div style="left:318px;top:280px;width:30px;height:1px;background:#1c1c1c"></div><div style="left:318px;top:280px;width:1px;height:24px;background:#1c1c1c"></div><div style="left:317px;top:305px;width:33px;height:1px;background:#4f4f4f"></div><div style="left:349px;top:279px;width:1px;height:27px;background:#4f4f4f"></div><div style="left:318px;top:303px;width:30px;height:1px;background:#3e3e3e"></div><div style="left:347px;top:280px;width:1px;height:24px;background:#3e3e3e"></div><div style="left:320px;top:282px;width:27px;height:21px;background:rgb(255, 255, 255)"></div><div style="left:23px;top:465px;width:32px;height:1px;background:#2b2b2b"></div><div style="left:23px;top:465px;width:1px;height:26px;background:#2b2b2b"></div><div style="left:24px;top:466px;width:30px;height:1px;background:#1c1c1c"></div><div style="left:24px;top:466px;width:1px;height:24px;background:#1c1c1c"></div><div style="left:23px;top:491px;width:33px;height:1px;background:#4f4f4f"></div><div style="left:55px;top:465px;width:1px;height:27px;background:#4f4f4f"></div><div style="left:24px;top:489px;width:30px;height:1px;background:#3e3e3e"></div><div style="left:53px;top:466px;width:1px;height:24px;background:#3e3e3e"></div><div style="left:26px;top:468px;width:27px;height:21px;background:rgb(255, 255, 255)"></div><div style="left:65px;top:465px;width:32px;height:1px;background:#2b2b2b"></div><div style="left:65px;top:465px;width:1px;height:26px;background:#2b2b2b"></div><div style="left:66px;top:466px;width:30px;height:1px;background:#1c1c1c"></div><div style="left:66px;top:466px;width:1px;height:24px;background:#1c1c1c"></div><div style="left:65px;top:491px;width:33px;height:1px;background:#4f4f4f"></div><div style="left:97px;top:465px;width:1px;height:27px;background:#4f4f4f"></div><div style="left:66px;top:489px;width:30px;height:1px;background:#3e3e3e"></div><div style="left:95px;top:466px;width:1px;height:24px;background:#3e3e3e"></div><div style="left:68px;top:468px;width:27px;height:21px;background:rgb(255, 255, 255)"></div><div style="left:107px;top:465px;width:32px;height:1px;background:#2b2b2b"></div><div style="left:107px;top:465px;width:1px;height:26px;background:#2b2b2b"></div><div style="left:108px;top:466px;width:30px;height:1px;background:#1c1c1c"></div><div style="left:108px;top:466px;width:1px;height:24px;background:#1c1c1c"></div><div style="left:107px;top:491px;width:33px;height:1px;background:#4f4f4f"></div><div style="left:139px;top:465px;width:1px;height:27px;background:#4f4f4f"></div><div style="left:108px;top:489px;width:30px;height:1px;background:#3e3e3e"></div><div style="left:137px;top:466px;width:1px;height:24px;background:#3e3e3e"></div><div style="left:110px;top:468px;width:27px;height:21px;background:rgb(255, 255, 255)"></div><div style="left:149px;top:465px;width:32px;height:1px;background:#2b2b2b"></div><div style="left:149px;top:465px;width:1px;height:26px;background:#2b2b2b"></div><div style="left:150px;top:466px;width:30px;height:1px;background:#1c1c1c"></div><div style="left:150px;top:466px;width:1px;height:24px;background:#1c1c1c"></div><div style="left:149px;top:491px;width:33px;height:1px;background:#4f4f4f"></div><div style="left:181px;top:465px;width:1px;height:27px;background:#4f4f4f"></div><div style="left:150px;top:489px;width:30px;height:1px;background:#3e3e3e"></div><div style="left:179px;top:466px;width:1px;height:24px;background:#3e3e3e"></div><div style="left:152px;top:468px;width:27px;height:21px;background:rgb(255, 255, 255)"></div><div style="left:191px;top:465px;width:32px;height:1px;background:#2b2b2b"></div><div style="left:191px;top:465px;width:1px;height:26px;background:#2b2b2b"></div><div style="left:192px;top:466px;width:30px;height:1px;background:#1c1c1c"></div><div style="left:192px;top:466px;width:1px;height:24px;background:#1c1c1c"></div><div style="left:191px;top:491px;width:33px;height:1px;background:#4f4f4f"></div><div style="left:223px;top:465px;width:1px;height:27px;background:#4f4f4f"></div><div style="left:192px;top:489px;width:30px;height:1px;background:#3e3e3e"></div><div style="left:221px;top:466px;width:1px;height:24px;background:#3e3e3e"></div><div style="left:194px;top:468px;width:27px;height:21px;background:rgb(255, 255, 255)"></div><div style="left:233px;top:465px;width:32px;height:1px;background:#2b2b2b"></div><div style="left:233px;top:465px;width:1px;height:26px;background:#2b2b2b"></div><div style="left:234px;top:466px;width:30px;height:1px;background:#1c1c1c"></div><div style="left:234px;top:466px;width:1px;height:24px;background:#1c1c1c"></div><div style="left:233px;top:491px;width:33px;height:1px;background:#4f4f4f"></div><div style="left:265px;top:465px;width:1px;height:27px;background:#4f4f4f"></div><div style="left:234px;top:489px;width:30px;height:1px;background:#3e3e3e"></div><div style="left:263px;top:466px;width:1px;height:24px;background:#3e3e3e"></div><div style="left:236px;top:468px;width:27px;height:21px;background:rgb(255, 255, 255)"></div><div style="left:275px;top:465px;width:32px;height:1px;background:#2b2b2b"></div><div style="left:275px;top:465px;width:1px;height:26px;background:#2b2b2b"></div><div style="left:276px;top:466px;width:30px;height:1px;background:#1c1c1c"></div><div style="left:276px;top:466px;width:1px;height:24px;background:#1c1c1c"></div><div style="left:275px;top:491px;width:33px;height:1px;background:#4f4f4f"></div><div style="left:307px;top:465px;width:1px;height:27px;background:#4f4f4f"></div><div style="left:276px;top:489px;width:30px;height:1px;background:#3e3e3e"></div><div style="left:305px;top:466px;width:1px;height:24px;background:#3e3e3e"></div><div style="left:278px;top:468px;width:27px;height:21px;background:rgb(255, 255, 255)"></div><div style="left:317px;top:465px;width:32px;height:1px;background:#2b2b2b"></div><div style="left:317px;top:465px;width:1px;height:26px;background:#2b2b2b"></div><div style="left:318px;top:466px;width:30px;height:1px;background:#1c1c1c"></div><div style="left:318px;top:466px;width:1px;height:24px;background:#1c1c1c"></div><div style="left:317px;top:491px;width:33px;height:1px;background:#4f4f4f"></div><div style="left:349px;top:465px;width:1px;height:27px;background:#4f4f4f"></div><div style="left:318px;top:489px;width:30px;height:1px;background:#3e3e3e"></div><div style="left:347px;top:466px;width:1px;height:24px;background:#3e3e3e"></div><div style="left:320px;top:468px;width:27px;height:21px;background:rgb(255, 255, 255)"></div><div style="left:23px;top:501px;width:32px;height:1px;background:#2b2b2b"></div><div style="left:23px;top:501px;width:1px;height:26px;background:#2b2b2b"></div><div style="left:24px;top:502px;width:30px;height:1px;background:#1c1c1c"></div><div style="left:24px;top:502px;width:1px;height:24px;background:#1c1c1c"></div><div style="left:23px;top:527px;width:33px;height:1px;background:#4f4f4f"></div><div style="left:55px;top:501px;width:1px;height:27px;background:#4f4f4f"></div><div style="left:24px;top:525px;width:30px;height:1px;background:#3e3e3e"></div><div style="left:53px;top:502px;width:1px;height:24px;background:#3e3e3e"></div><div style="left:26px;top:504px;width:27px;height:21px;background:rgb(255, 255, 255)"></div><div style="left:65px;top:501px;width:32px;height:1px;background:#2b2b2b"></div><div style="left:65px;top:501px;width:1px;height:26px;background:#2b2b2b"></div><div style="left:66px;top:502px;width:30px;height:1px;background:#1c1c1c"></div><div style="left:66px;top:502px;width:1px;height:24px;background:#1c1c1c"></div><div style="left:65px;top:527px;width:33px;height:1px;background:#4f4f4f"></div><div style="left:97px;top:501px;width:1px;height:27px;background:#4f4f4f"></div><div style="left:66px;top:525px;width:30px;height:1px;background:#3e3e3e"></div><div style="left:95px;top:502px;width:1px;height:24px;background:#3e3e3e"></div><div style="left:68px;top:504px;width:27px;height:21px;background:rgb(255, 255, 255)"></div><div style="left:107px;top:501px;width:32px;height:1px;background:#2b2b2b"></div><div style="left:107px;top:501px;width:1px;height:26px;background:#2b2b2b"></div><div style="left:108px;top:502px;width:30px;height:1px;background:#1c1c1c"></div><div style="left:108px;top:502px;width:1px;height:24px;background:#1c1c1c"></div><div style="left:107px;top:527px;width:33px;height:1px;background:#4f4f4f"></div><div style="left:139px;top:501px;width:1px;height:27px;background:#4f4f4f"></div><div style="left:108px;top:525px;width:30px;height:1px;background:#3e3e3e"></div><div style="left:137px;top:502px;width:1px;height:24px;background:#3e3e3e"></div><div style="left:110px;top:504px;width:27px;height:21px;background:rgb(255, 255, 255)"></div><div style="left:149px;top:501px;width:32px;height:1px;background:#2b2b2b"></div><div style="left:149px;top:501px;width:1px;height:26px;background:#2b2b2b"></div><div style="left:150px;top:502px;width:30px;height:1px;background:#1c1c1c"></div><div style="left:150px;top:502px;width:1px;height:24px;background:#1c1c1c"></div><div style="left:149px;top:527px;width:33px;height:1px;background:#4f4f4f"></div><div style="left:181px;top:501px;width:1px;height:27px;background:#4f4f4f"></div><div style="left:150px;top:525px;width:30px;height:1px;background:#3e3e3e"></div><div style="left:179px;top:502px;width:1px;height:24px;background:#3e3e3e"></div><div style="left:152px;top:504px;width:27px;height:21px;background:rgb(255, 255, 255)"></div><div style="left:191px;top:501px;width:32px;height:1px;background:#2b2b2b"></div><div style="left:191px;top:501px;width:1px;height:26px;background:#2b2b2b"></div><div style="left:192px;top:502px;width:30px;height:1px;background:#1c1c1c"></div><div style="left:192px;top:502px;width:1px;height:24px;background:#1c1c1c"></div><div style="left:191px;top:527px;width:33px;height:1px;background:#4f4f4f"></div><div style="left:223px;top:501px;width:1px;height:27px;background:#4f4f4f"></div><div style="left:192px;top:525px;width:30px;height:1px;background:#3e3e3e"></div><div style="left:221px;top:502px;width:1px;height:24px;background:#3e3e3e"></div><div style="left:194px;top:504px;width:27px;height:21px;background:rgb(255, 255, 255)"></div><div style="left:233px;top:501px;width:32px;height:1px;background:#2b2b2b"></div><div style="left:233px;top:501px;width:1px;height:26px;background:#2b2b2b"></div><div style="left:234px;top:502px;width:30px;height:1px;background:#1c1c1c"></div><div style="left:234px;top:502px;width:1px;height:24px;background:#1c1c1c"></div><div style="left:233px;top:527px;width:33px;height:1px;background:#4f4f4f"></div><div style="left:265px;top:501px;width:1px;height:27px;background:#4f4f4f"></div><div style="left:234px;top:525px;width:30px;height:1px;background:#3e3e3e"></div><div style="left:263px;top:502px;width:1px;height:24px;background:#3e3e3e"></div><div style="left:236px;top:504px;width:27px;height:21px;background:rgb(255, 255, 255)"></div><div style="left:275px;top:501px;width:32px;height:1px;background:#2b2b2b"></div><div style="left:275px;top:501px;width:1px;height:26px;background:#2b2b2b"></div><div style="left:276px;top:502px;width:30px;height:1px;background:#1c1c1c"></div><div style="left:276px;top:502px;width:1px;height:24px;background:#1c1c1c"></div><div style="left:275px;top:527px;width:33px;height:1px;background:#4f4f4f"></div><div style="left:307px;top:501px;width:1px;height:27px;background:#4f4f4f"></div><div style="left:276px;top:525px;width:30px;height:1px;background:#3e3e3e"></div><div style="left:305px;top:502px;width:1px;height:24px;background:#3e3e3e"></div><div style="left:278px;top:504px;width:27px;height:21px;background:rgb(255, 255, 255)"></div><div style="left:317px;top:501px;width:32px;height:1px;background:#2b2b2b"></div><div style="left:317px;top:501px;width:1px;height:26px;background:#2b2b2b"></div><div style="left:318px;top:502px;width:30px;height:1px;background:#1c1c1c"></div><div style="left:318px;top:502px;width:1px;height:24px;background:#1c1c1c"></div><div style="left:317px;top:527px;width:33px;height:1px;background:#4f4f4f"></div><div style="left:349px;top:501px;width:1px;height:27px;background:#4f4f4f"></div><div style="left:318px;top:525px;width:30px;height:1px;background:#3e3e3e"></div><div style="left:347px;top:502px;width:1px;height:24px;background:#3e3e3e"></div><div style="left:320px;top:504px;width:27px;height:21px;background:rgb(255, 255, 255)"></div><svg style="left:0;top:0" width="70" height="210"><rect x="19" y="167" width="1" height="1" fill="#dedede"/><rect x="19" y="169" width="1" height="1" fill="#dedede"/><rect x="19" y="171" width="1" height="1" fill="#dedede"/><rect x="19" y="173" width="1" height="1" fill="#dedede"/><rect x="19" y="175" width="1" height="1" fill="#dedede"/><rect x="19" y="177" width="1" height="1" fill="#dedede"/><rect x="19" y="179" width="1" height="1" fill="#dedede"/><rect x="19" y="181" width="1" height="1" fill="#dedede"/><rect x="19" y="183" width="1" height="1" fill="#dedede"/><rect x="19" y="185" width="1" height="1" fill="#dedede"/><rect x="19" y="187" width="1" height="1" fill="#dedede"/><rect x="19" y="189" width="1" height="1" fill="#dedede"/><rect x="19" y="191" width="1" height="1" fill="#dedede"/><rect x="19" y="193" width="1" height="1" fill="#dedede"/><rect x="19" y="195" width="1" height="1" fill="#dedede"/><rect x="19" y="197" width="1" height="1" fill="#dedede"/><rect x="19" y="199" width="1" height="1" fill="#dedede"/><rect x="19" y="201" width="1" height="1" fill="#dedede"/><rect x="20" y="202" width="1" height="1" fill="#dedede"/><rect x="21" y="167" width="1" height="1" fill="#dedede"/><rect x="21" y="201" width="1" height="1" fill="#dedede"/><rect x="22" y="202" width="1" height="1" fill="#dedede"/><rect x="23" y="167" width="1" height="1" fill="#dedede"/><rect x="23" y="201" width="1" height="1" fill="#dedede"/><rect x="24" y="202" width="1" height="1" fill="#dedede"/><rect x="25" y="167" width="1" height="1" fill="#dedede"/><rect x="25" y="201" width="1" height="1" fill="#dedede"/><rect x="26" y="202" width="1" height="1" fill="#dedede"/><rect x="27" y="167" width="1" height="1" fill="#dedede"/><rect x="27" y="201" width="1" height="1" fill="#dedede"/><rect x="28" y="202" width="1" height="1" fill="#dedede"/><rect x="29" y="167" width="1" height="1" fill="#dedede"/><rect x="29" y="201" width="1" height="1" fill="#dedede"/><rect x="30" y="202" width="1" height="1" fill="#dedede"/><rect x="31" y="167" width="1" height="1" fill="#dedede"/><rect x="31" y="201" width="1" height="1" fill="#dedede"/><rect x="32" y="202" width="1" height="1" fill="#dedede"/><rect x="33" y="167" width="1" height="1" fill="#dedede"/><rect x="33" y="201" width="1" height="1" fill="#dedede"/><rect x="34" y="202" width="1" height="1" fill="#dedede"/><rect x="35" y="167" width="1" height="1" fill="#dedede"/><rect x="35" y="201" width="1" height="1" fill="#dedede"/><rect x="36" y="202" width="1" height="1" fill="#dedede"/><rect x="37" y="167" width="1" height="1" fill="#dedede"/><rect x="37" y="201" width="1" height="1" fill="#dedede"/><rect x="38" y="202" width="1" height="1" fill="#dedede"/><rect x="39" y="167" width="1" height="1" fill="#dedede"/><rect x="39" y="201" width="1" height="1" fill="#dedede"/><rect x="40" y="202" width="1" height="1" fill="#dedede"/><rect x="41" y="167" width="1" height="1" fill="#dedede"/><rect x="41" y="201" width="1" height="1" fill="#dedede"/><rect x="42" y="202" width="1" height="1" fill="#dedede"/><rect x="43" y="167" width="1" height="1" fill="#dedede"/><rect x="43" y="201" width="1" height="1" fill="#dedede"/><rect x="44" y="202" width="1" height="1" fill="#dedede"/><rect x="45" y="167" width="1" height="1" fill="#dedede"/><rect x="45" y="201" width="1" height="1" fill="#dedede"/><rect x="46" y="202" width="1" height="1" fill="#dedede"/><rect x="47" y="167" width="1" height="1" fill="#dedede"/><rect x="47" y="201" width="1" height="1" fill="#dedede"/><rect x="48" y="202" width="1" height="1" fill="#dedede"/><rect x="49" y="167" width="1" height="1" fill="#dedede"/><rect x="49" y="201" width="1" height="1" fill="#dedede"/><rect x="50" y="202" width="1" height="1" fill="#dedede"/><rect x="51" y="167" width="1" height="1" fill="#dedede"/><rect x="51" y="201" width="1" height="1" fill="#dedede"/><rect x="52" y="202" width="1" height="1" fill="#dedede"/><rect x="53" y="167" width="1" height="1" fill="#dedede"/><rect x="53" y="201" width="1" height="1" fill="#dedede"/><rect x="54" y="202" width="1" height="1" fill="#dedede"/><rect x="55" y="167" width="1" height="1" fill="#dedede"/><rect x="55" y="201" width="1" height="1" fill="#dedede"/><rect x="56" y="202" width="1" height="1" fill="#dedede"/><rect x="57" y="167" width="1" height="1" fill="#dedede"/><rect x="57" y="201" width="1" height="1" fill="#dedede"/><rect x="58" y="202" width="1" height="1" fill="#dedede"/><rect x="59" y="167" width="1" height="1" fill="#dedede"/><rect x="59" y="169" width="1" height="1" fill="#dedede"/><rect x="59" y="171" width="1" height="1" fill="#dedede"/><rect x="59" y="173" width="1" height="1" fill="#dedede"/><rect x="59" y="175" width="1" height="1" fill="#dedede"/><rect x="59" y="177" width="1" height="1" fill="#dedede"/><rect x="59" y="179" width="1" height="1" fill="#dedede"/><rect x="59" y="181" width="1" height="1" fill="#dedede"/><rect x="59" y="183" width="1" height="1" fill="#dedede"/><rect x="59" y="185" width="1" height="1" fill="#dedede"/><rect x="59" y="187" width="1" height="1" fill="#dedede"/><rect x="59" y="189" width="1" height="1" fill="#dedede"/><rect x="59" y="191" width="1" height="1" fill="#dedede"/><rect x="59" y="193" width="1" height="1" fill="#dedede"/><rect x="59" y="195" width="1" height="1" fill="#dedede"/><rect x="59" y="197" width="1" height="1" fill="#dedede"/><rect x="59" y="199" width="1" height="1" fill="#dedede"/><rect x="59" y="201" width="1" height="1" fill="#dedede"/><rect x="60" y="168" width="1" height="1" fill="#dedede"/><rect x="60" y="170" width="1" height="1" fill="#dedede"/><rect x="60" y="172" width="1" height="1" fill="#dedede"/><rect x="60" y="174" width="1" height="1" fill="#dedede"/><rect x="60" y="176" width="1" height="1" fill="#dedede"/><rect x="60" y="178" width="1" height="1" fill="#dedede"/><rect x="60" y="180" width="1" height="1" fill="#dedede"/><rect x="60" y="182" width="1" height="1" fill="#dedede"/><rect x="60" y="184" width="1" height="1" fill="#dedede"/><rect x="60" y="186" width="1" height="1" fill="#dedede"/><rect x="60" y="188" width="1" height="1" fill="#dedede"/><rect x="60" y="190" width="1" height="1" fill="#dedede"/><rect x="60" y="192" width="1" height="1" fill="#dedede"/><rect x="60" y="194" width="1" height="1" fill="#dedede"/><rect x="60" y="196" width="1" height="1" fill="#dedede"/><rect x="60" y="198" width="1" height="1" fill="#dedede"/><rect x="60" y="200" width="1" height="1" fill="#dedede"/><rect x="60" y="202" width="1" height="1" fill="#dedede"/></svg><svg style="left:12px;top:9px" width="26" height="26" viewBox="0 0 26 26">
<defs><linearGradient id="ig" x1="0" y1="0" x2="0" y2="1"><stop offset="0" stop-color="#1f2223"/><stop offset="0.47" stop-color="#161819"/><stop offset="0.53" stop-color="#0b0c0c"/><stop offset="1" stop-color="#0a0b0b"/></linearGradient>
<linearGradient id="wg" x1="0" y1="0" x2="1" y2="0"><stop offset="0" stop-color="#2a8a55"/><stop offset="0.25" stop-color="#3cc47a"/><stop offset="1" stop-color="#43d884"/></linearGradient></defs>
<rect x="0.5" y="0.5" width="25" height="25" rx="5" fill="#ffffff" opacity="0.85"/>
<rect x="1" y="1" width="24" height="24" rx="4.5" fill="url(#ig)"/>
<path d="M2.2,9.4 C3.8,6.8 5.5,5.3 7.0,5.4 C9.5,5.7 11.2,9.8 12.9,13.8 C14.6,17.7 16.6,20.0 19.1,19.9 C21.0,19.8 22.5,18.3 24,16.5" stroke="url(#wg)" stroke-width="1.05" fill="none"/>
</svg><div class="t" style="left:42.01px;top:13px;color:#1b1b1b;transform:scaleX(0.9696)">Select Color</div><svg style="left:750px;top:12px" width="22" height="22"><path d="M3,3 L18,18 M18,3 L3,18" stroke="#111" stroke-width="1.3" fill="none"/></svg><div class="t" style="left:18.38px;top:65px;color:#f0f0f0;transform:scaleX(0.9480)">Basic colors</div><div class="t" style="left:18.57px;top:431px;color:#f0f0f0;transform:scaleX(0.9865)">Custom colors</div><div style="left:20px;top:321px;width:332px;height:1px;background:#575757"></div><div style="left:20px;top:321px;width:1px;height:37px;background:#575757"></div><div style="left:20px;top:358px;width:333px;height:1px;background:#161616"></div><div style="left:352px;top:321px;width:1px;height:38px;background:#161616"></div><div class="t" style="left:117.67px;top:332px;color:#f0f0f0;transform:scaleX(0.9507)">Pick Screen Color</div><div style="left:20px;top:543px;width:332px;height:1px;background:#575757"></div><div style="left:20px;top:543px;width:1px;height:37px;background:#575757"></div><div style="left:20px;top:580px;width:333px;height:1px;background:#161616"></div><div style="left:352px;top:543px;width:1px;height:38px;background:#161616"></div><div class="t" style="left:98.86px;top:554px;color:#f0f0f0;transform:scaleX(0.9961)">Add to Custom Colors</div><div style="left:529px;top:602px;width:114px;height:1px;background:#161616"></div><div style="left:529px;top:602px;width:1px;height:40px;background:#161616"></div><div style="left:529px;top:641px;width:114px;height:1px;background:#161616"></div><div style="left:642px;top:602px;width:1px;height:40px;background:#161616"></div><div style="left:530px;top:603px;width:112px;height:1px;background:#575757"></div><div style="left:530px;top:603px;width:1px;height:38px;background:#575757"></div><div class="t" style="left:573.84px;top:614px;color:#f0f0f0;transform:scaleX(0.9224)">OK</div><div style="left:655px;top:602px;width:113px;height:1px;background:#575757"></div><div style="left:655px;top:602px;width:1px;height:39px;background:#575757"></div><div style="left:655px;top:641px;width:114px;height:1px;background:#161616"></div><div style="left:768px;top:602px;width:1px;height:40px;background:#161616"></div><div class="t" style="left:684.05px;top:614px;color:#f0f0f0;transform:scaleX(0.9506)">Cancel</div><div style="left:373px;top:75px;width:331px;height:1px;background:#2a2a2a"></div><div style="left:373px;top:76px;width:330px;height:1px;background:#262c28"></div><div style="left:373px;top:75px;width:1px;height:302px;background:#2a3030"></div><div style="left:374px;top:77px;width:330px;height:300px;background:linear-gradient(to bottom, rgba(200,200,200,0), rgb(200,200,200)), linear-gradient(to right, rgb(200,0,0), rgb(200,0,200) 16.667%, rgb(0,0,200) 33.333%, rgb(0,200,200) 50%, rgb(0,200,0) 66.667%, rgb(200,200,0) 83.333%, rgb(200,0,0))"></div><div style="left:374px;top:376px;width:330px;height:1px;background:rgba(255,255,255,0.32)"></div><div style="left:703px;top:77px;width:1px;height:299px;background:rgba(255,255,255,0.08)"></div><div style="left:374px;top:77px;width:1px;height:299px;background:rgba(255,255,255,0.08)"></div><div style="left:704px;top:76px;width:1px;height:301px;background:rgba(120,150,150,0.12)"></div><div style="left:470px;top:77px;width:30px;height:3px;background:#000"></div><div style="left:484px;top:75px;width:3px;height:18px;background:#000"></div><div style="left:729px;top:74px;width:23px;height:1px;background:#3c3c3c"></div><div style="left:729px;top:74px;width:1px;height:304px;background:#3c3c3c"></div><div style="left:730px;top:75px;width:22px;height:303px;background:#ffffff"></div><div style="left:730px;top:75px;width:20px;height:2px;background:#b0b0a6"></div><div style="left:730px;top:75px;width:1px;height:302px;background:#a6a69a"></div><div style="left:731px;top:77px;width:19px;height:299px;background:linear-gradient(to bottom, #0000ff, #000000)"></div><svg style="left:750px;top:71px" width="12" height="16"><polygon points="1,5 10,14 10,0 6,0" fill="#000"/></svg><div style="left:373px;top:416px;width:89px;height:167px;background:#56564c"></div><div style="left:373px;top:416px;width:88px;height:1px;background:#34342c"></div><div style="left:373px;top:416px;width:1px;height:166px;background:#34342c"></div><div style="left:374px;top:417px;width:87px;height:165px;background:#0000ff"></div><div style="left:544px;top:416px;width:66px;height:1px;background:#161616"></div><div style="left:544px;top:416px;width:1px;height:31px;background:#161616"></div><div style="left:544px;top:447px;width:67px;height:1px;background:#4e4e4e"></div><div style="left:610px;top:416px;width:1px;height:32px;background:#4e4e4e"></div><div style="left:585px;top:419px;width:22px;height:1px;background:#555555"></div><div style="left:585px;top:419px;width:1px;height:12px;background:#555555"></div><div style="left:584px;top:431px;width:23px;height:1px;background:#141414"></div><div style="left:585px;top:433px;width:22px;height:1px;background:#555555"></div><div style="left:585px;top:433px;width:1px;height:12px;background:#555555"></div><div style="left:584px;top:445px;width:23px;height:1px;background:#141414"></div><div style="left:607px;top:418px;width:1px;height:28px;background:#141414"></div><div style="left:594px;top:422px;width:1px;height:1px;background:#ffffff"></div><div style="left:595px;top:422px;width:1px;height:1px;background:#ffffff"></div><div style="left:593px;top:423px;width:1px;height:1px;background:#ffffff"></div><div style="left:594px;top:423px;width:1px;height:1px;background:#ffffff"></div><div style="left:595px;top:423px;width:1px;height:1px;background:#ffffff"></div><div style="left:596px;top:423px;width:1px;height:1px;background:#ffffff"></div><div style="left:593px;top:424px;width:1px;height:1px;background:#ffffff"></div><div style="left:594px;top:424px;width:1px;height:1px;background:#ffffff"></div><div style="left:595px;top:424px;width:1px;height:1px;background:#ffffff"></div><div style="left:596px;top:424px;width:1px;height:1px;background:#ffffff"></div><div style="left:593px;top:437px;width:1px;height:1px;background:#ffffff"></div><div style="left:594px;top:437px;width:1px;height:1px;background:#ffffff"></div><div style="left:595px;top:437px;width:1px;height:1px;background:#ffffff"></div><div style="left:596px;top:437px;width:1px;height:1px;background:#ffffff"></div><div style="left:592px;top:438px;width:1px;height:1px;background:#ffffff"></div><div style="left:593px;top:438px;width:1px;height:1px;background:#ffffff"></div><div style="left:594px;top:438px;width:1px;height:1px;background:#ffffff"></div><div style="left:595px;top:438px;width:1px;height:1px;background:#ffffff"></div><div style="left:596px;top:438px;width:1px;height:1px;background:#ffffff"></div><div style="left:597px;top:438px;width:1px;height:1px;background:#ffffff"></div><div style="left:593px;top:439px;width:1px;height:1px;background:#ffffff"></div><div style="left:594px;top:439px;width:1px;height:1px;background:#ffffff"></div><div style="left:595px;top:439px;width:1px;height:1px;background:#ffffff"></div><div style="left:596px;top:439px;width:1px;height:1px;background:#ffffff"></div><div style="left:544px;top:458px;width:66px;height:1px;background:#161616"></div><div style="left:544px;top:458px;width:1px;height:31px;background:#161616"></div><div style="left:544px;top:489px;width:67px;height:1px;background:#4e4e4e"></div><div style="left:610px;top:458px;width:1px;height:32px;background:#4e4e4e"></div><div style="left:585px;top:461px;width:22px;height:1px;background:#555555"></div><div style="left:585px;top:461px;width:1px;height:12px;background:#555555"></div><div style="left:584px;top:473px;width:23px;height:1px;background:#141414"></div><div style="left:585px;top:475px;width:22px;height:1px;background:#555555"></div><div style="left:585px;top:475px;width:1px;height:12px;background:#555555"></div><div style="left:584px;top:487px;width:23px;height:1px;background:#141414"></div><div style="left:607px;top:460px;width:1px;height:28px;background:#141414"></div><div style="left:594px;top:464px;width:1px;height:1px;background:#ffffff"></div><div style="left:595px;top:464px;width:1px;height:1px;background:#ffffff"></div><div style="left:593px;top:465px;width:1px;height:1px;background:#ffffff"></div><div style="left:594px;top:465px;width:1px;height:1px;background:#ffffff"></div><div style="left:595px;top:465px;width:1px;height:1px;background:#ffffff"></div><div style="left:596px;top:465px;width:1px;height:1px;background:#ffffff"></div><div style="left:593px;top:466px;width:1px;height:1px;background:#ffffff"></div><div style="left:594px;top:466px;width:1px;height:1px;background:#ffffff"></div><div style="left:595px;top:466px;width:1px;height:1px;background:#ffffff"></div><div style="left:596px;top:466px;width:1px;height:1px;background:#ffffff"></div><div style="left:593px;top:479px;width:1px;height:1px;background:#ffffff"></div><div style="left:594px;top:479px;width:1px;height:1px;background:#ffffff"></div><div style="left:595px;top:479px;width:1px;height:1px;background:#ffffff"></div><div style="left:596px;top:479px;width:1px;height:1px;background:#ffffff"></div><div style="left:592px;top:480px;width:1px;height:1px;background:#ffffff"></div><div style="left:593px;top:480px;width:1px;height:1px;background:#ffffff"></div><div style="left:594px;top:480px;width:1px;height:1px;background:#ffffff"></div><div style="left:595px;top:480px;width:1px;height:1px;background:#ffffff"></div><div style="left:596px;top:480px;width:1px;height:1px;background:#ffffff"></div><div style="left:597px;top:480px;width:1px;height:1px;background:#ffffff"></div><div style="left:593px;top:481px;width:1px;height:1px;background:#ffffff"></div><div style="left:594px;top:481px;width:1px;height:1px;background:#ffffff"></div><div style="left:595px;top:481px;width:1px;height:1px;background:#ffffff"></div><div style="left:596px;top:481px;width:1px;height:1px;background:#ffffff"></div><div style="left:544px;top:500px;width:66px;height:1px;background:#161616"></div><div style="left:544px;top:500px;width:1px;height:31px;background:#161616"></div><div style="left:544px;top:531px;width:67px;height:1px;background:#4e4e4e"></div><div style="left:610px;top:500px;width:1px;height:32px;background:#4e4e4e"></div><div style="left:585px;top:503px;width:22px;height:1px;background:#555555"></div><div style="left:585px;top:503px;width:1px;height:12px;background:#555555"></div><div style="left:584px;top:515px;width:23px;height:1px;background:#141414"></div><div style="left:585px;top:517px;width:22px;height:1px;background:#555555"></div><div style="left:585px;top:517px;width:1px;height:12px;background:#555555"></div><div style="left:584px;top:529px;width:23px;height:1px;background:#141414"></div><div style="left:607px;top:502px;width:1px;height:28px;background:#141414"></div><div style="left:594px;top:506px;width:1px;height:1px;background:#ffffff"></div><div style="left:595px;top:506px;width:1px;height:1px;background:#ffffff"></div><div style="left:593px;top:507px;width:1px;height:1px;background:#ffffff"></div><div style="left:594px;top:507px;width:1px;height:1px;background:#ffffff"></div><div style="left:595px;top:507px;width:1px;height:1px;background:#ffffff"></div><div style="left:596px;top:507px;width:1px;height:1px;background:#ffffff"></div><div style="left:593px;top:508px;width:1px;height:1px;background:#ffffff"></div><div style="left:594px;top:508px;width:1px;height:1px;background:#ffffff"></div><div style="left:595px;top:508px;width:1px;height:1px;background:#ffffff"></div><div style="left:596px;top:508px;width:1px;height:1px;background:#ffffff"></div><div style="left:593px;top:521px;width:1px;height:1px;background:#ffffff"></div><div style="left:594px;top:521px;width:1px;height:1px;background:#ffffff"></div><div style="left:595px;top:521px;width:1px;height:1px;background:#ffffff"></div><div style="left:596px;top:521px;width:1px;height:1px;background:#ffffff"></div><div style="left:592px;top:522px;width:1px;height:1px;background:#ffffff"></div><div style="left:593px;top:522px;width:1px;height:1px;background:#ffffff"></div><div style="left:594px;top:522px;width:1px;height:1px;background:#ffffff"></div><div style="left:595px;top:522px;width:1px;height:1px;background:#ffffff"></div><div style="left:596px;top:522px;width:1px;height:1px;background:#ffffff"></div><div style="left:597px;top:522px;width:1px;height:1px;background:#ffffff"></div><div style="left:593px;top:523px;width:1px;height:1px;background:#ffffff"></div><div style="left:594px;top:523px;width:1px;height:1px;background:#ffffff"></div><div style="left:595px;top:523px;width:1px;height:1px;background:#ffffff"></div><div style="left:596px;top:523px;width:1px;height:1px;background:#ffffff"></div><div style="left:693px;top:416px;width:66px;height:1px;background:#161616"></div><div style="left:693px;top:416px;width:1px;height:31px;background:#161616"></div><div style="left:693px;top:447px;width:67px;height:1px;background:#4e4e4e"></div><div style="left:759px;top:416px;width:1px;height:32px;background:#4e4e4e"></div><div style="left:734px;top:419px;width:22px;height:1px;background:#555555"></div><div style="left:734px;top:419px;width:1px;height:12px;background:#555555"></div><div style="left:733px;top:431px;width:23px;height:1px;background:#141414"></div><div style="left:734px;top:433px;width:22px;height:1px;background:#555555"></div><div style="left:734px;top:433px;width:1px;height:12px;background:#555555"></div><div style="left:733px;top:445px;width:23px;height:1px;background:#141414"></div><div style="left:756px;top:418px;width:1px;height:28px;background:#141414"></div><div style="left:743px;top:422px;width:1px;height:1px;background:#ffffff"></div><div style="left:744px;top:422px;width:1px;height:1px;background:#ffffff"></div><div style="left:742px;top:423px;width:1px;height:1px;background:#ffffff"></div><div style="left:743px;top:423px;width:1px;height:1px;background:#ffffff"></div><div style="left:744px;top:423px;width:1px;height:1px;background:#ffffff"></div><div style="left:745px;top:423px;width:1px;height:1px;background:#ffffff"></div><div style="left:742px;top:424px;width:1px;height:1px;background:#ffffff"></div><div style="left:743px;top:424px;width:1px;height:1px;background:#ffffff"></div><div style="left:744px;top:424px;width:1px;height:1px;background:#ffffff"></div><div style="left:745px;top:424px;width:1px;height:1px;background:#ffffff"></div><div style="left:741px;top:437px;width:1px;height:1px;background:#ffffff"></div><div style="left:742px;top:437px;width:1px;height:1px;background:#ffffff"></div><div style="left:743px;top:437px;width:1px;height:1px;background:#ffffff"></div><div style="left:744px;top:437px;width:1px;height:1px;background:#ffffff"></div><div style="left:745px;top:437px;width:1px;height:1px;background:#ffffff"></div><div style="left:741px;top:438px;width:1px;height:1px;background:#ffffff"></div><div style="left:742px;top:438px;width:1px;height:1px;background:#ffffff"></div><div style="left:743px;top:438px;width:1px;height:1px;background:#ffffff"></div><div style="left:744px;top:438px;width:1px;height:1px;background:#ffffff"></div><div style="left:745px;top:438px;width:1px;height:1px;background:#ffffff"></div><div style="left:742px;top:439px;width:1px;height:1px;background:#ffffff"></div><div style="left:743px;top:439px;width:1px;height:1px;background:#ffffff"></div><div style="left:744px;top:439px;width:1px;height:1px;background:#ffffff"></div><div style="left:693px;top:458px;width:66px;height:1px;background:#161616"></div><div style="left:693px;top:458px;width:1px;height:31px;background:#161616"></div><div style="left:693px;top:489px;width:67px;height:1px;background:#4e4e4e"></div><div style="left:759px;top:458px;width:1px;height:32px;background:#4e4e4e"></div><div style="left:734px;top:461px;width:22px;height:1px;background:#555555"></div><div style="left:734px;top:461px;width:1px;height:12px;background:#555555"></div><div style="left:733px;top:473px;width:23px;height:1px;background:#141414"></div><div style="left:734px;top:475px;width:22px;height:1px;background:#555555"></div><div style="left:734px;top:475px;width:1px;height:12px;background:#555555"></div><div style="left:733px;top:487px;width:23px;height:1px;background:#141414"></div><div style="left:756px;top:460px;width:1px;height:28px;background:#141414"></div><div style="left:743px;top:464px;width:1px;height:1px;background:#ffffff"></div><div style="left:744px;top:464px;width:1px;height:1px;background:#ffffff"></div><div style="left:742px;top:465px;width:1px;height:1px;background:#ffffff"></div><div style="left:743px;top:465px;width:1px;height:1px;background:#ffffff"></div><div style="left:744px;top:465px;width:1px;height:1px;background:#ffffff"></div><div style="left:745px;top:465px;width:1px;height:1px;background:#ffffff"></div><div style="left:742px;top:466px;width:1px;height:1px;background:#ffffff"></div><div style="left:743px;top:466px;width:1px;height:1px;background:#ffffff"></div><div style="left:744px;top:466px;width:1px;height:1px;background:#ffffff"></div><div style="left:745px;top:466px;width:1px;height:1px;background:#ffffff"></div><div style="left:741px;top:479px;width:1px;height:1px;background:#ffffff"></div><div style="left:742px;top:479px;width:1px;height:1px;background:#ffffff"></div><div style="left:743px;top:479px;width:1px;height:1px;background:#ffffff"></div><div style="left:744px;top:479px;width:1px;height:1px;background:#ffffff"></div><div style="left:745px;top:479px;width:1px;height:1px;background:#ffffff"></div><div style="left:741px;top:480px;width:1px;height:1px;background:#ffffff"></div><div style="left:742px;top:480px;width:1px;height:1px;background:#ffffff"></div><div style="left:743px;top:480px;width:1px;height:1px;background:#ffffff"></div><div style="left:744px;top:480px;width:1px;height:1px;background:#ffffff"></div><div style="left:745px;top:480px;width:1px;height:1px;background:#ffffff"></div><div style="left:742px;top:481px;width:1px;height:1px;background:#ffffff"></div><div style="left:743px;top:481px;width:1px;height:1px;background:#ffffff"></div><div style="left:744px;top:481px;width:1px;height:1px;background:#ffffff"></div><div style="left:693px;top:500px;width:66px;height:1px;background:#161616"></div><div style="left:693px;top:500px;width:1px;height:31px;background:#161616"></div><div style="left:693px;top:531px;width:67px;height:1px;background:#4e4e4e"></div><div style="left:759px;top:500px;width:1px;height:32px;background:#4e4e4e"></div><div style="left:734px;top:503px;width:22px;height:1px;background:#555555"></div><div style="left:734px;top:503px;width:1px;height:12px;background:#555555"></div><div style="left:733px;top:515px;width:23px;height:1px;background:#141414"></div><div style="left:734px;top:517px;width:22px;height:1px;background:#555555"></div><div style="left:734px;top:517px;width:1px;height:12px;background:#555555"></div><div style="left:733px;top:529px;width:23px;height:1px;background:#141414"></div><div style="left:756px;top:502px;width:1px;height:28px;background:#141414"></div><div style="left:743px;top:506px;width:1px;height:1px;background:#ffffff"></div><div style="left:744px;top:506px;width:1px;height:1px;background:#ffffff"></div><div style="left:742px;top:507px;width:1px;height:1px;background:#ffffff"></div><div style="left:743px;top:507px;width:1px;height:1px;background:#ffffff"></div><div style="left:744px;top:507px;width:1px;height:1px;background:#ffffff"></div><div style="left:745px;top:507px;width:1px;height:1px;background:#ffffff"></div><div style="left:742px;top:508px;width:1px;height:1px;background:#ffffff"></div><div style="left:743px;top:508px;width:1px;height:1px;background:#ffffff"></div><div style="left:744px;top:508px;width:1px;height:1px;background:#ffffff"></div><div style="left:745px;top:508px;width:1px;height:1px;background:#ffffff"></div><div style="left:741px;top:521px;width:1px;height:1px;background:#ffffff"></div><div style="left:742px;top:521px;width:1px;height:1px;background:#ffffff"></div><div style="left:743px;top:521px;width:1px;height:1px;background:#ffffff"></div><div style="left:744px;top:521px;width:1px;height:1px;background:#ffffff"></div><div style="left:745px;top:521px;width:1px;height:1px;background:#ffffff"></div><div style="left:741px;top:522px;width:1px;height:1px;background:#ffffff"></div><div style="left:742px;top:522px;width:1px;height:1px;background:#ffffff"></div><div style="left:743px;top:522px;width:1px;height:1px;background:#ffffff"></div><div style="left:744px;top:522px;width:1px;height:1px;background:#ffffff"></div><div style="left:745px;top:522px;width:1px;height:1px;background:#ffffff"></div><div style="left:742px;top:523px;width:1px;height:1px;background:#ffffff"></div><div style="left:743px;top:523px;width:1px;height:1px;background:#ffffff"></div><div style="left:744px;top:523px;width:1px;height:1px;background:#ffffff"></div><div style="left:544px;top:551px;width:163px;height:1px;background:#161616"></div><div style="left:544px;top:551px;width:1px;height:31px;background:#161616"></div><div style="left:544px;top:582px;width:164px;height:1px;background:#4e4e4e"></div><div style="left:707px;top:551px;width:1px;height:32px;background:#4e4e4e"></div><div class="t" style="left:497.59px;top:423px;color:#f0f0f0;transform:scaleX(0.9848)">Hue:</div><div class="t" style="left:504.79px;top:465px;color:#f0f0f0;transform:scaleX(0.9538)">Sat:</div><div class="t" style="left:506.79px;top:507px;color:#f0f0f0;transform:scaleX(0.9671)">Val:</div><div class="t" style="left:649.13px;top:423px;color:#f0f0f0;transform:scaleX(0.9164)">Red:</div><div class="t" style="left:630.65px;top:465px;color:#f0f0f0;transform:scaleX(0.9677)">Green:</div><div class="t" style="left:644.24px;top:507px;color:#f0f0f0;transform:scaleX(0.9602)">Blue:</div><div class="t" style="left:483.23px;top:558px;color:#f0f0f0;transform:scaleX(0.9665)">HTML:</div><div class="t" style="left:549.69px;top:423px;color:#f0f0f0;transform:scaleX(0.9629)">240</div><div class="t" style="left:549.67px;top:465px;color:#f0f0f0;transform:scaleX(0.9716)">255</div><div class="t" style="left:549.67px;top:507px;color:#f0f0f0;transform:scaleX(0.9716)">255</div><div class="t" style="left:697.36px;top:423px;color:#f0f0f0;transform:scaleX(0.9969)">0</div><div class="t" style="left:697.36px;top:465px;color:#f0f0f0;transform:scaleX(0.9969)">0</div><div class="t" style="left:697.69px;top:507px;color:#f0f0f0;transform:scaleX(0.9519)">255</div><div class="t" style="left:549.17px;top:558px;color:#f0f0f0;transform:scaleX(1.0225)">#0000ff</div>
</body></html>
